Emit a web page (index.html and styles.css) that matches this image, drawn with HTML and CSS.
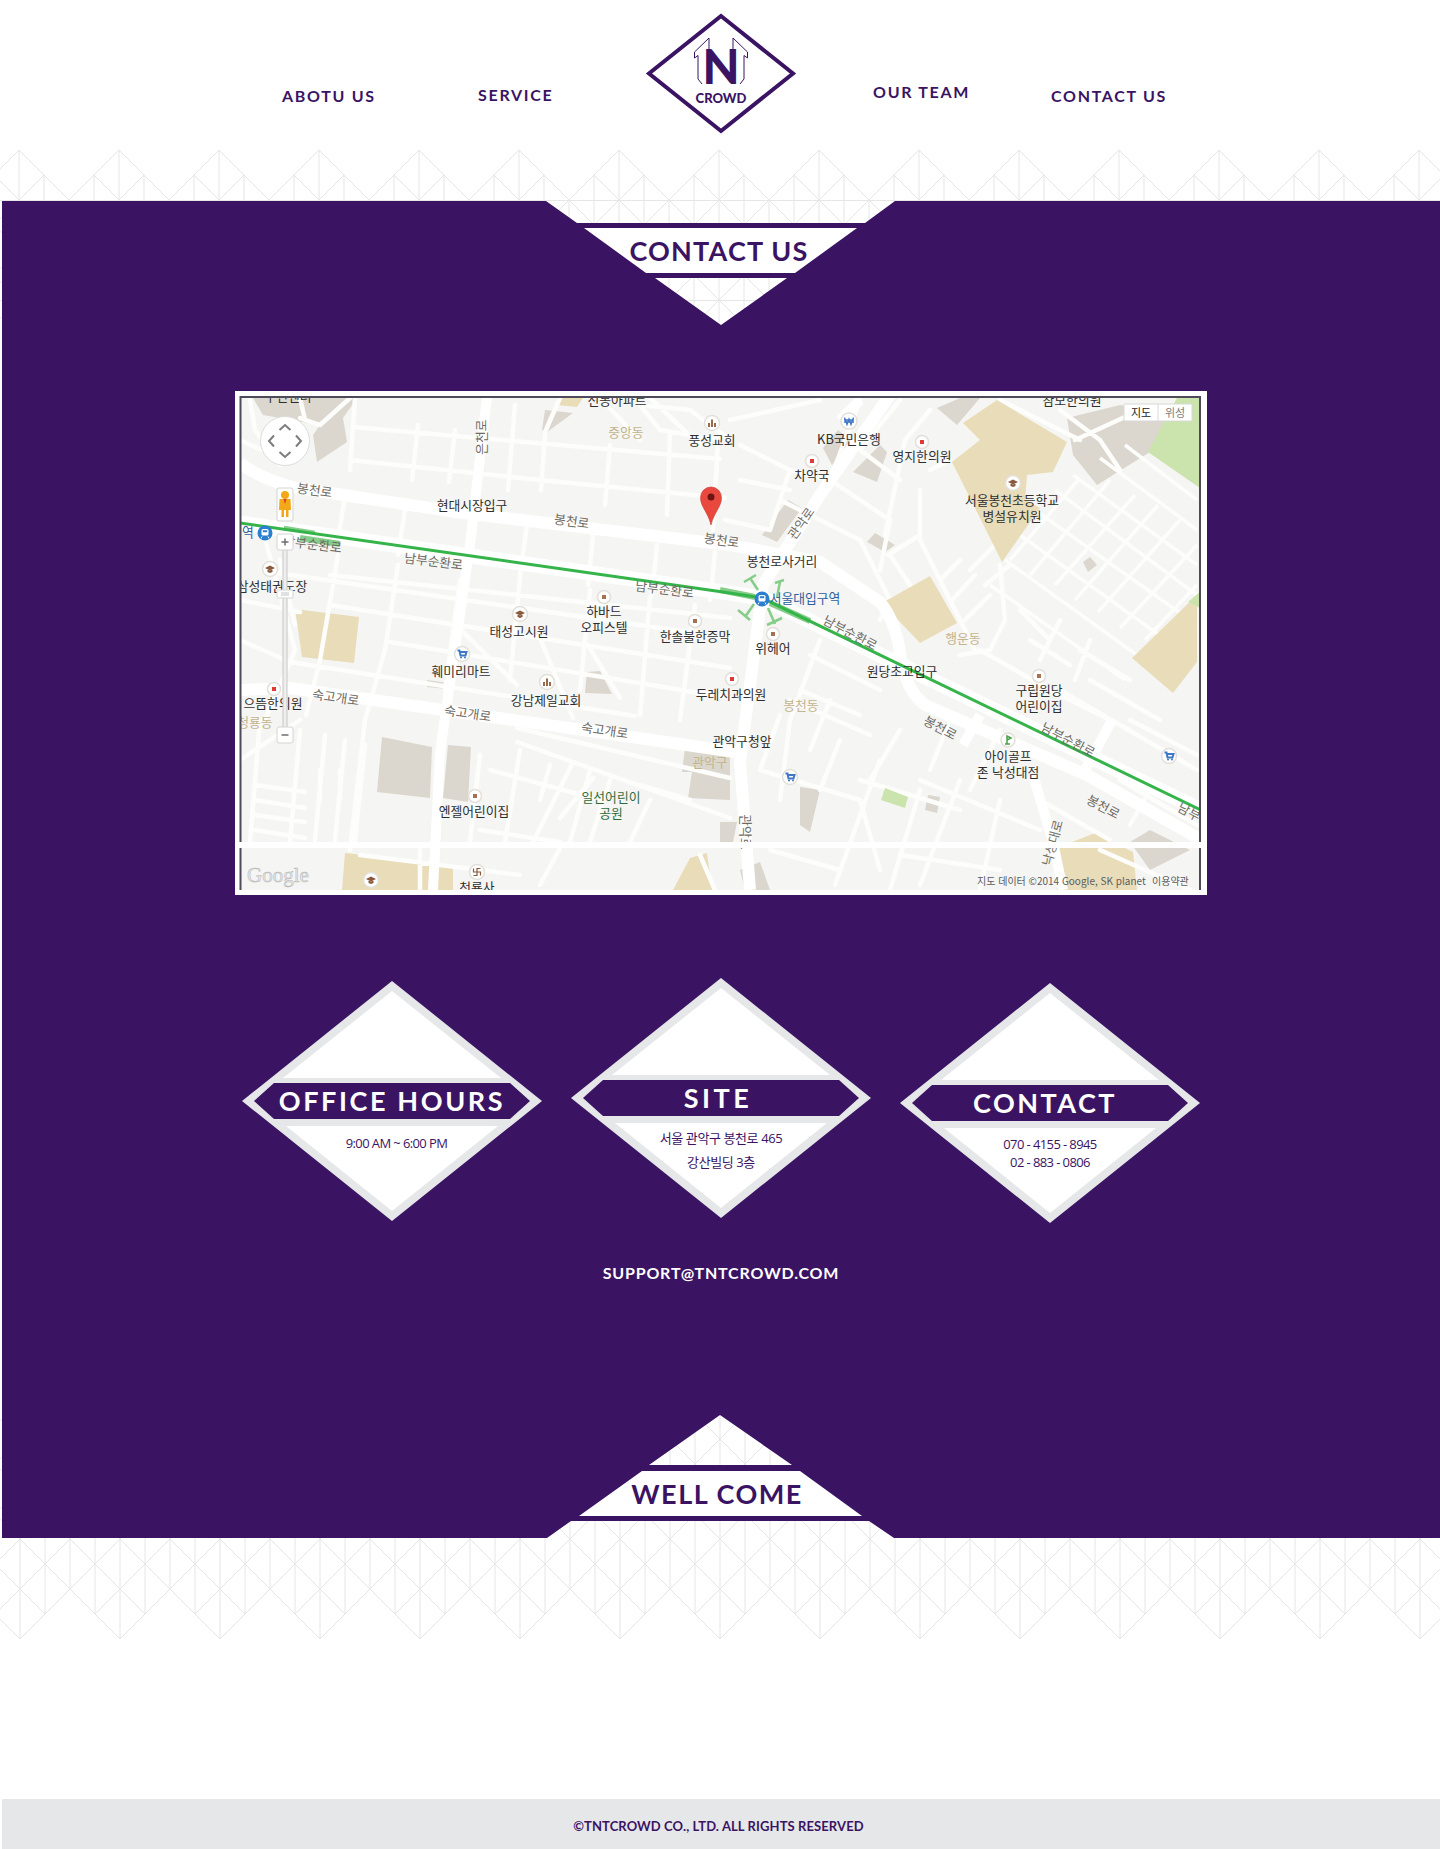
FILE: index.html
```html
<!DOCTYPE html>
<html lang="ko">

<head>
    <meta charset="UTF-8">
    <title>TNT Crowd - Contact Us</title>
    <link rel="stylesheet" href="styles.css">
</head>

<body>
    <div class="page">
        <!-- pattern behind the top of the panel -->
        <svg class="band band-top" width="1440" height="175" viewBox="0 150 1440 175">
            <defs>
                <pattern id="edgeTop" x="19" y="150" width="100" height="100" patternUnits="userSpaceOnUse">
                    <path class="lattice" d="M0 100V0M100 100V0M25 100V25M50 100V50M75 100V25M0 100L100 0M0 0L100 100M50 100L0 50M50 100L100 50M0 50L25 25M100 50L75 25" />
                </pattern>
                <pattern id="fullTop" x="19" y="250" width="100" height="100" patternUnits="userSpaceOnUse">
                    <path class="lattice" d="M0 0V100M25 0V100M50 0V100M75 0V100M100 0V100M0 0L100 100M0 100L100 0M50 0L0 50M50 0L100 50M0 50L50 100M100 50L50 100" />
                </pattern>
            </defs>
            <rect x="0" y="150" width="1440" height="100" fill="url(#edgeTop)" />
            <rect x="0" y="250" width="1440" height="75" fill="url(#fullTop)" />
            <path class="lattice" d="M0 200.5H1440M0 300.5H1440" />
        </svg>

        <!-- pattern behind the bottom of the panel -->
        <svg class="band band-bottom" width="1440" height="224" viewBox="0 1415 1440 224">
            <defs>
                <pattern id="edgeBottom" x="20" y="1539" width="100" height="100" patternUnits="userSpaceOnUse">
                    <path class="lattice" d="M0 0V100M100 0V100M25 0V75M50 0V50M75 0V75M0 0L100 100M0 100L100 0M50 0L0 50M50 0L100 50M0 50L25 75M100 50L75 75" />
                </pattern>
                <pattern id="fullBottom" x="20" y="1439" width="100" height="100" patternUnits="userSpaceOnUse">
                    <path class="lattice" d="M0 0V100M25 0V100M50 0V100M75 0V100M100 0V100M0 0L100 100M0 100L100 0M50 0L0 50M50 0L100 50M0 50L50 100M100 50L50 100" />
                </pattern>
            </defs>
            <rect x="0" y="1415" width="1440" height="124" fill="url(#fullBottom)" />
            <rect x="0" y="1539" width="1440" height="100" fill="url(#edgeBottom)" />
        </svg>

        <header class="site-header">
            <a class="nav-link nav-about" href="#">ABOTU US</a>
            <a class="nav-link nav-service" href="#">SERVICE</a>
            <svg class="logo" width="180" height="140" viewBox="0 0 180 140">
                <polygon class="logo-frame" points="91,16 163,73.5 91,131 19,73.5" />
                <path class="logo-arrow" d="M79 38L64.500 52V58L68 55.500V79L72 84M79 38V50" />
                <path class="logo-arrow" d="M103 38L117.500 52V58L114 55.500V79L110 84M103 38V50" />
                <text class="logo-n" x="91" y="84">N</text>
                <text class="logo-crowd" x="91" y="103">CROWD</text>
            </svg>
            <a class="nav-link nav-team" href="#">OUR TEAM</a>
            <a class="nav-link nav-contact" href="#">CONTACT US</a>
        </header>

        <main class="panel">
            <h1 class="ribbon ribbon-down">CONTACT US</h1>

            <div class="map-frame">
                <svg class="map" width="972" height="504" viewBox="235 391 972 504">
                    <defs>
                        <clipPath id="mapClip"><rect x="240" y="397" width="960" height="493" /></clipPath>
                        <g id="dotBrown"><circle r="6.500" class="badge" /><rect x="-2" y="-2" width="4" height="4" fill="#a9704f" /></g>
                        <g id="dotRed"><circle r="6.500" class="badge" /><rect x="-2" y="-2" width="4" height="4" fill="#e03a36" /></g>
                        <g id="school"><circle r="7.500" class="badge" /><path d="M-5 -1L0 -3.500L5 -1L0 1.500ZM-2.500 1V3L0 4L2.500 3V1" fill="#8a5a3c" /></g>
                        <g id="church"><circle r="7.500" class="badge" /><path d="M-4 4V0H-2V4ZM-1 4V-3.500H1V4ZM2 4V0H4V4Z" fill="#9a6a48" /></g>
                        <g id="cart"><circle r="7.500" class="badge" /><path d="M-4.500 -3.500H-2.500L-1.500 1.500H3.500L4.500 -2H-2" fill="none" stroke="#3f78c4" stroke-width="2" /><circle cx="-1" cy="3.500" r="1" fill="#3f78c4" /><circle cx="3" cy="3.500" r="1" fill="#3f78c4" /></g>
                        <g id="station"><circle r="7.500" fill="#2a7fd0" /><rect x="-3.500" y="-4" width="7" height="6.500" rx="1.500" fill="#fff" /><rect x="-2.200" y="-2.800" width="4.400" height="2" fill="#2a7fd0" /><path d="M-3 3.500L-4 5.500M3 3.500L4 5.500" stroke="#fff" /></g>
                    </defs>

                    <g clip-path="url(#mapClip)">
                        <rect class="land" x="240" y="397" width="960" height="493" />

                        <path class="tan" d="M295 609L359 617L354 663L302 657Z" />
                        <path class="tan" d="M345 853L453 865V890H342Z" />
                        <path class="tan" d="M673 890L690 858L707 853L712 890Z" />
                        <path class="tan" d="M1057 848L1095 833L1133 852L1137 890H1057Z" />
                        <path class="tan" d="M558 398H583L577 407L557 405Z" />

                        <path class="building" d="M253 398H357L343 418L347 442L317 462L313 435L320 425L263 415Z" />
                        <path class="building" d="M382 737L432 747L430 798L377 792Z" />
                        <path class="building" d="M448 745L471 747L468 802L443 798Z" />
                        <path class="building" d="M587 672L600 671L612 694L585 693Z" />
                        <path class="building" d="M427 680L448 683L447 689L427 687Z" />
                        <path class="building" d="M685 748L730 752V800L688 798L692 772L682 772Z" />
                        <path class="building" d="M545 410L573 413L547 432L542 430Z" />
                        <path class="building" d="M788 500L802 508L777 542L762 535Z" />
                        <path class="building" d="M867 542L875 533L895 545L885 552Z" />
                        <path class="building" d="M823 448L838 430L850 440L832 465Z" />
                        <path class="building" d="M853 472L880 445L887 452L877 482Z" />
                        <path class="building" d="M1067 418L1120 405L1170 412L1150 452L1097 485L1073 455Z" />
                        <path class="building" d="M937 408L960 398H980L957 425Z" />
                        <path class="building" d="M800 787L820 790L810 832L800 825Z" />
                        <path class="building" d="M928 795L940 797L937 813L925 810Z" />
                        <path class="building" d="M720 822H737L733 842H720Z" />
                        <path class="building" d="M1130 842L1150 830L1190 850L1150 870Z" />
                        <path class="building" d="M740 870L760 862L770 890H745Z" />

                        <!-- small streets -->
                        <path class="street" d="M353 427L560 445L720 459M350 460L540 480L725 498M270 572L730 638M330 605L730 668M390 642L730 698M290 662L635 716M517 728L730 778M240 600L300 612M240 640L290 662M240 690L300 690M240 760L300 720M330 575L730 618
                            M355 398L350 470M418 425L412 480M455 430L449 482M515 405L508 490M545 435L541 490M610 445L605 505M670 432L667 515M718 440L713 530
                            M345 497L337 545M405 510L398 555M527 525L520 575M593 535L588 585M657 545L652 595M715 552L710 600
                            M338 555L320 660L306 715M398 565L385 650L365 720L350 850M460 580L445 690M520 577L510 680M590 590L580 690M650 597L640 715M695 605L680 720
                            M463 632L517 685M540 638L573 718M588 645L620 698M260 520L295 650L265 720M280 560L295 625
                            M325 735L315 840M345 740L335 840M365 745L355 840M300 730L290 842M260 720L250 842M320 770V800M340 770V800
                            M255 785L305 792M255 800L305 808M255 815L305 822M255 830L305 838M480 755L470 842M520 750L505 842M550 765L540 800M590 770L570 842M517 742L730 818M573 762L533 842M593 778L560 818M650 800L630 842M640 785L690 800M610 780L590 842M490 770L600 800M480 830L560 842
                            M250 400L255 430L280 465M300 398L305 420M240 440L262 450M360 855L520 875M560 848L540 885M700 855L715 890M420 850L420 890M300 418L320 425L350 398
                            M640 405L690 410L730 440M640 405L660 430L720 440M600 398L640 440M560 398L545 432M650 398L700 445M730 420L820 400M740 445L790 470L770 530M790 470L830 480L860 400M780 500L860 540L890 600L880 620M830 480L890 520L880 570M740 480L790 490M725 520L770 530
                            M920 490L920 540L950 600L975 650M888 555L920 535M890 555L910 585M940 580L960 560M952 600L975 575M965 620L990 595M1000 565L1005 620L990 650L960 655M885 535L905 440M860 450L900 480M900 400L860 450M1000 400L1080 440M1060 410L1100 440L1120 470M1075 440L1140 410M980 650L1050 690L1130 730M1090 640L1075 680M1060 620L1040 660M1080 650L1130 680M905 440L930 410M930 470L950 460M970 570L1000 540M985 585L1010 565M1020 610L1050 640M1030 640L1070 665
                            M790 700L870 735M820 640L790 720L780 800M810 655L880 690M800 690L860 715M760 770L860 800L880 870M880 760L835 885M920 790L890 890M960 780L920 885M1000 800L980 890M1040 800L1110 840M1060 690L1197 770M1090 680L1160 720M1130 720L1197 755M1120 780L1197 825M840 740L820 790M900 730L870 780M770 850L840 870M780 715L760 770M900 855L1000 870M1100 850L1190 890M920 780L1040 830M860 780L960 810M950 720L930 770M1000 730L970 790M1150 790L1130 825M830 700L810 750" />

                        <!-- block grid on the east side -->
                        <path class="street-thin" d="M1073 475L1197 565M1055 490L1197 595M1035 510L1197 625M1020 535L1180 650M1005 560L1155 668M990 585L1125 680M1100 458L1197 530M1125 445L1197 500
                            M1010 560L1080 478M1030 575L1110 480M1055 585L1135 495M1075 600L1158 505M1098 612L1180 520M1120 628L1197 545M1145 640L1197 585" />

                        <path class="tan" d="M963 423L997 400L1067 442L1053 472L1027 475L1025 500L1040 508L1002 562L952 462L980 440Z" />
                        <path class="tan" d="M930 576L957 623L920 643L882 603Z" />
                        <path class="tan" d="M1197 595V662L1173 693L1132 658Z" />
                        <path class="park" d="M1148 452L1177 398H1200V488Z" />
                        <path class="park" d="M1188 602L1200 592V608Z" />
                        <path class="park" d="M885 788L908 797L905 808L881 800Z" />
                        <path class="building" d="M1083 562L1090 557L1097 565L1088 572Z" />

                        <!-- main roads -->
                        <path class="road-main" d="M240 463Q262 480 297 488L463 513L563 525L730 545L820 562L880 602Q895 620 900 652Q905 690 925 705L1087 775L1205 842" />
                        <path class="road-main" d="M240 690L290 688L443 710L597 732L735 752" />
                        <path class="road-main" d="M890 395L820 495L763 585L740 762L750 890" />
                        <path class="road-mid" d="M487 397L470 545L440 752L433 890" />
                        <path class="road-mid" d="M1033 775L1053 842L1063 890M980 715L963 745M1112 720L1085 770M860 400L840 420" />
                        <path class="road-nambu" d="M240 523L730 593L762 598L1205 812" />
                        <path class="transit-light" d="M300 538L340 544M720 590L755 597M770 603L810 621" />
                        <path class="transit-light-thin" d="M284 527L315 532M750 578L758 590M744 582L756 575M780 582L777 597M775 583L784 580M754 604L745 617M738 610L750 620M768 608L775 624M767 625L782 618" />
                        <path class="transit-line" d="M240 523L730 593L762 598L1205 812" />

                        <use href="#church" x="712" y="423" />
                        <use href="#school" x="270" y="569" />
                        <use href="#dotBrown" x="604" y="597" />
                        <use href="#school" x="520" y="614" />
                        <use href="#dotBrown" x="695" y="621" />
                        <use href="#cart" x="462" y="654" />
                        <use href="#church" x="547" y="682" />
                        <use href="#dotRed" x="274" y="689" />
                        <use href="#dotBrown" x="475" y="796" />
                        <use href="#school" x="371" y="880" />
                        <g transform="translate(477 872)"><circle r="7.500" class="badge" /><path d="M-3.500 -3.500V0H3.500V3.500M3.500 -3.500H0V3.500H-3.500" fill="none" stroke="#8a5a3c" stroke-width="1.200" /></g>
                        <g transform="translate(849 421)"><circle r="8" class="badge" /><path d="M-4.500 -3.500L-2 3.500L0 -2L2 3.500L4.500 -3.500M-5 -1H5M-5 1H5" fill="none" stroke="#3f78c4" stroke-width="1.300" /></g>
                        <use href="#dotRed" x="812" y="461" />
                        <use href="#dotRed" x="922" y="442" />
                        <use href="#school" x="1013" y="483" />
                        <use href="#dotBrown" x="773" y="634" />
                        <use href="#dotRed" x="732" y="679" />
                        <use href="#dotBrown" x="1039" y="676" />
                        <g transform="translate(1008 740)"><circle r="7" class="badge" /><path d="M-1 4V-4L3 -2L-1 0M-3 4H2" fill="none" stroke="#4aa04a" stroke-width="1.500" /></g>
                        <use href="#cart" x="1169" y="756" />
                        <use href="#cart" x="790" y="777" />
                        <use href="#station" x="762" y="599" />
                        <use href="#station" x="265" y="533" />

                        <text class="lbl" x="288" y="401">구민센터</text>
                        <text class="lbl" x="617" y="405">신봉아파트</text>
                        <text class="lbl area" x="626" y="437">중앙동</text>
                        <text class="lbl" x="712" y="445">풍성교회</text>
                        <text class="lbl road" transform="rotate(8 314 495)" x="314" y="495">봉천로</text>
                        <text class="lbl" x="472" y="510">현대시장입구</text>
                        <text class="lbl road" transform="rotate(8 571 526)" x="571" y="526">봉천로</text>
                        <text class="lbl road" transform="rotate(8 721 545)" x="721" y="545">봉천로</text>
                        <text class="lbl metro" x="248" y="537">역</text>
                        <text class="lbl road" transform="rotate(7 312 549)" x="312" y="549">남부순환로</text>
                        <text class="lbl road" transform="rotate(7 433 566)" x="433" y="566">남부순환로</text>
                        <text class="lbl road" transform="rotate(7 664 594)" x="664" y="594">남부순환로</text>
                        <text class="lbl" x="272" y="591">삼성태권도장</text>
                        <text class="lbl" x="519" y="636">태성고시원</text>
                        <text class="lbl" x="604" y="616">하바드</text>
                        <text class="lbl" x="604" y="632">오피스텔</text>
                        <text class="lbl" x="695" y="641">한솔불한증막</text>
                        <text class="lbl" x="461" y="676">훼미리마트</text>
                        <text class="lbl" x="731" y="699">두레치과의원</text>
                        <text class="lbl" x="273" y="708">으뜸한의원</text>
                        <text class="lbl road" transform="rotate(8 335 702)" x="335" y="702">숙고개로</text>
                        <text class="lbl road" transform="rotate(8 467 718)" x="467" y="718">숙고개로</text>
                        <text class="lbl road" transform="rotate(8 604 735)" x="604" y="735">숙고개로</text>
                        <text class="lbl" x="546" y="705">강남제일교회</text>
                        <text class="lbl area" x="255" y="727">청룡동</text>
                        <text class="lbl" x="742" y="746">관악구청앞</text>
                        <text class="lbl area" x="710" y="767">관악구</text>
                        <text class="lbl" x="474" y="816">엔젤어린이집</text>
                        <text class="lbl green" x="611" y="802">일선어린이</text>
                        <text class="lbl green" x="611" y="818">공원</text>
                        <text class="lbl" x="477" y="892">천룡사</text>
                        <text class="lbl road" transform="rotate(-90 486 437)" x="486" y="437">은천로</text>
                        <text class="lbl" x="849" y="444">KB국민은행</text>
                        <text class="lbl" x="922" y="461">영지한의원</text>
                        <text class="lbl" x="812" y="480">차약국</text>
                        <text class="lbl" x="1012" y="505">서울봉천초등학교</text>
                        <text class="lbl" x="1012" y="521">병설유치원</text>
                        <text class="lbl" x="1072" y="405">참모한의원</text>
                        <text class="lbl road" transform="rotate(-55 805 526)" x="805" y="526">관악로</text>
                        <text class="lbl" x="782" y="566">봉천로사거리</text>
                        <text class="lbl metro" x="805" y="603">서울대입구역</text>
                        <text class="lbl road" transform="rotate(28 848 637)" x="848" y="637">남부순환로</text>
                        <text class="lbl" x="773" y="653">위헤어</text>
                        <text class="lbl area" x="963" y="643">행운동</text>
                        <text class="lbl" x="902" y="676">원당초교입구</text>
                        <text class="lbl area" x="801" y="710">봉천동</text>
                        <text class="lbl" x="1039" y="695">구립원당</text>
                        <text class="lbl" x="1039" y="711">어린이집</text>
                        <text class="lbl road" transform="rotate(28 938 732)" x="938" y="732">봉천로</text>
                        <text class="lbl" x="1008" y="761">아이골프</text>
                        <text class="lbl" x="1008" y="777">존 낙성대점</text>
                        <text class="lbl road" transform="rotate(28 1066 744)" x="1066" y="744">남부순환로</text>
                        <text class="lbl road" transform="rotate(28 1101 811)" x="1101" y="811">봉천로</text>
                        <text class="lbl road" transform="rotate(28 1187 816)" x="1187" y="816">남부</text>
                        <text class="lbl road" transform="rotate(-75 1057 844)" x="1057" y="844">낙성대로</text>
                        <text class="lbl road" transform="rotate(90 741 832)" x="741" y="832">관악로</text>

                        <text class="google" x="247" y="882">Google</text>
                        <text class="credit" x="977" y="885">지도 데이터 ©2014 Google, SK planet</text>
                        <text class="credit" x="1152" y="885">이용약관</text>
                    </g>

                    <!-- pan control -->
                    <circle class="pan" cx="285" cy="441" r="24.500" />
                    <path class="pan-arrow" d="M279.500 430L285 425L290.500 430M279.500 452L285 457L290.500 452M274 435.500L269 441L274 446.500M296 435.500L301 441L296 446.500" />

                    <!-- pegman -->
                    <rect class="zoom-btn" x="277" y="488" width="16" height="33" rx="2" />
                    <circle cx="285" cy="495" r="4" fill="#f2a818" />
                    <path d="M279.500 499H290.500L291 510H288.500V517H286V510H284V517H281.500V510H279Z" fill="#f2a818" />
                    <path d="M283.500 499H286.500L285 504Z" fill="#d8402a" />

                    <!-- zoom slider -->
                    <rect class="zoom-track" x="283" y="548" width="4" height="180" />
                    <rect class="zoom-btn" x="277" y="534" width="16" height="16" rx="2" />
                    <path class="zoom-sign" d="M281.500 542H288.500M285 538.500V545.500" />
                    <rect class="zoom-btn" x="277" y="590" width="16" height="8" rx="1" />
                    <path class="zoom-grip" d="M281 593H289M281 595H289" />
                    <rect class="zoom-btn" x="277" y="727" width="16" height="16" rx="2" />
                    <path class="zoom-sign" d="M281.500 735H288.500" />

                    <!-- map type buttons -->
                    <rect class="type-btn" x="1124" y="404" width="68" height="17" rx="1" />
                    <path class="type-split" d="M1158 404V421" />
                    <text class="type-on" x="1141" y="417">지도</text>
                    <text class="type-off" x="1175" y="417">위성</text>

                    <!-- marker -->
                    <path d="M711 525C708 512 700.500 507 700.500 497.500A10.500 10.500 0 0 1 721.500 497.500C721.500 507 714 512 711 525Z" fill="#e9483f" stroke="#c9352e" stroke-width=".6" />
                    <circle cx="711" cy="497" r="3.500" fill="#6b1512" />

                    <path class="map-edge" d="M240.500 842V397H1200V842M240.500 848V890M1200 848V890" />
                    <rect x="235" y="842" width="972" height="6" fill="#fff" />
                </svg>
            </div>

            <section class="diamonds">
                <article class="diamond diamond-hours">
                    <div class="diamond-top"></div>
                    <h2 class="diamond-label">OFFICE HOURS</h2>
                    <div class="diamond-body">
                        <p>9:00 AM ~ 6:00 PM</p>
                    </div>
                </article>
                <article class="diamond diamond-site">
                    <div class="diamond-top"></div>
                    <h2 class="diamond-label">SITE</h2>
                    <div class="diamond-body">
                        <p class="site-lines">서울 관악구 봉천로 465<br>강산빌딩 3층</p>
                    </div>
                </article>
                <article class="diamond diamond-contact">
                    <div class="diamond-top"></div>
                    <h2 class="diamond-label">CONTACT</h2>
                    <div class="diamond-body">
                        <p>070 - 4155 - 8945<br>02 - 883 - 0806</p>
                    </div>
                </article>
            </section>

            <p class="support-mail">SUPPORT@TNTCROWD.COM</p>

            <h2 class="ribbon ribbon-up">WELL COME</h2>
        </main>

        <footer class="site-footer">©TNTCROWD CO., LTD. ALL RIGHTS RESERVED</footer>
    </div>
</body>

</html>
```
FILE: styles.css
```css
html,
body {
    margin: 0;
    padding: 0;
    background-color: #fff;
}

.page {
    position: relative;
    width: 1440px;
    height: 1849px;
    overflow: hidden;
    font-family: 'Lato', sans-serif;
    color: #3a1463; /* brand purple */
}

/* lattice pattern, only seen around the panel */
.band {
    position: absolute;
    left: 0;
}

.band-top {
    top: 150px;
}

.band-bottom {
    top: 1415px;
}

.lattice {
    fill: none;
    stroke: #e6e6e6;
    stroke-width: 1;
}

/* header */
.site-header {
    position: relative;
    display: grid;
    grid-template-columns: 196px 152px 243px 178px auto;
    align-items: start;
    height: 201px;
    padding-left: 282px;
    box-sizing: border-box;
}

.nav-link {
    color: #3a1463;
    font-size: 16px;
    font-weight: 700;
    line-height: 16px;
    letter-spacing: 1.700px;
    text-decoration: none;
    white-space: nowrap;
}

.nav-about {
    margin-top: 88px;
}

.nav-service {
    margin-top: 87px;
}

.nav-team {
    margin-top: 84px;
}

.nav-contact {
    margin-top: 88px;
}

.logo {
    display: block;
}

.logo-frame {
    fill: #fff;
    stroke: #3a1463;
    stroke-width: 4;
}

.logo-arrow {
    fill: none;
    stroke: #3a1463;
    stroke-width: 1;
}

.logo-n {
    fill: #3a1463;
    font-size: 48px;
    font-weight: 900;
    text-anchor: middle;
}

.logo-crowd {
    fill: #3a1463;
    font-size: 13px;
    font-weight: 900;
    text-anchor: middle;
}

/* purple panel, the notches are cut out of it */
.panel {
    position: relative;
    width: 1438px;
    height: 1337px;
    margin-left: 2px;
    box-sizing: border-box;
    padding-top: 27px;
    background-color: #3a1463;
    clip-path: path(evenodd, "M0 0H1438V1337H0Z M544 0L575 22H863L893 0Z M653 77H785L719 124Z M545 1337L569 1320H867L892 1337Z M647 1264H790L718 1214Z");
}

.ribbon {
    width: 1438px;
    height: 45px;
    margin: 0;
    box-sizing: border-box;
    background-color: #fff;
    color: #3a1463;
    font-weight: 700;
    line-height: 45px;
    text-align: center;
}

.ribbon-down {
    padding-right: 4px;
    font-size: 27px;
    letter-spacing: 1.200px;
    clip-path: polygon(582px 0, 855px 0, 793px 45px, 644px 45px);
}

.ribbon-up {
    margin-top: 188px;
    padding-right: 8px;
    font-size: 27px;
    letter-spacing: 1.500px;
    clip-path: polygon(640px 0, 798px 0, 860px 45px, 577px 45px);
}

/* map */
.map-frame {
    width: 972px;
    height: 504px;
    margin: 118px auto 0;
    background-color: #fff;
}

.map {
    display: block;
    font-family: 'Noto Sans CJK KR', 'Noto Sans', sans-serif;
}

.land {
    fill: #f5f5f3;
}

.tan {
    fill: #e9dcb9;
}

.park {
    fill: #cbe3ac;
}

.building {
    fill: #dbd7ce;
}

.street {
    fill: none;
    stroke: #fdfdfb;
    stroke-width: 4.500;
    stroke-linecap: round;
    stroke-linejoin: round;
}

.street-thin {
    fill: none;
    stroke: #fdfdfb;
    stroke-width: 3.500;
}

.road-main {
    fill: none;
    stroke: #fff;
    stroke-width: 12;
    stroke-linejoin: round;
}

.road-mid {
    fill: none;
    stroke: #fff;
    stroke-width: 10;
}

.road-nambu {
    fill: none;
    stroke: #fff;
    stroke-width: 15;
}

.transit-line {
    fill: none;
    stroke: #35b44a;
    stroke-width: 3;
}

.transit-light {
    fill: none;
    stroke: #86cd8a;
    stroke-width: 6;
}

.transit-light-thin {
    fill: none;
    stroke: #86cd8a;
    stroke-width: 2.500;
}

.badge {
    fill: #fff;
    stroke: #e3e0da;
    stroke-width: 1.500;
}

.lbl {
    fill: #2e2e2e;
    font-size: 12.800px;
    text-anchor: middle;
}

.road {
    fill: #6e6b63;
}

.area {
    fill: #c4b48c;
}

.green {
    fill: #2f6d3a;
}

.metro {
    fill: #2c5f9e;
}

.google {
    fill: #e6e6e6;
    stroke: #b5b5b5;
    stroke-width: .5px;
    font-family: 'Liberation Serif', serif;
    font-size: 21px;
}

.credit {
    fill: #5c5c5c;
    font-size: 10px;
}

.pan {
    fill: #fff;
    stroke: #dcdcdc;
}

.pan-arrow {
    fill: none;
    stroke: #7d7d7d;
    stroke-width: 2;
}

.zoom-btn {
    fill: #fff;
    stroke: #d4d4d4;
}

.zoom-track {
    fill: #eeeeee;
    stroke: #c8c8c8;
}

.zoom-sign {
    fill: none;
    stroke: #6e6e6e;
    stroke-width: 1.500;
}

.zoom-grip {
    fill: none;
    stroke: #c2c2c2;
}

.type-btn {
    fill: #fff;
    stroke: #d9d9d9;
}

.type-split {
    stroke: #d9d9d9;
}

.type-on {
    fill: #222;
    font-size: 11px;
    text-anchor: middle;
}

.type-off {
    fill: #7c7c7c;
    font-size: 11px;
    text-anchor: middle;
}

.map-edge {
    fill: none;
    stroke: #4f4a5a;
    stroke-width: 2;
}

/* diamonds */
.diamonds {
    display: flex;
    align-items: flex-start;
    gap: 29px;
    width: 958px;
    margin: 83px auto 0;
}

.diamond {
    display: flex;
    flex-direction: column;
    flex: none;
    width: 300px;
    height: 240px;
    background-color: #e6e7e8;
    clip-path: polygon(150px 0, 300px 120px, 150px 240px, 0 120px);
}

.diamond-hours {
    margin-top: 3px;
}

.diamond-contact {
    margin-top: 5px;
}

.diamond-top {
    flex: none;
    height: 97px;
    background-color: #fff;
    clip-path: polygon(150px 10px, 259px 97px, 41px 97px);
}

.diamond-label {
    flex: none;
    height: 36px;
    margin: 5px 0 7px;
    background-color: #3a1463;
    color: #fff;
    font-size: 27px;
    font-weight: 700;
    line-height: 36px;
    text-align: center;
    clip-path: polygon(32px 0, 268px 0, 288px 18px, 268px 36px, 32px 36px, 12px 18px);
}

.diamond-hours .diamond-label {
    letter-spacing: 2.600px;
}

.diamond-site .diamond-label {
    letter-spacing: 3.500px;
    padding-right: 6px;
    box-sizing: border-box;
}

.diamond-contact .diamond-label {
    letter-spacing: 2.500px;
    padding-right: 10px;
    box-sizing: border-box;
}

.diamond-body {
    flex: none;
    height: 95px;
    background-color: #fff;
    clip-path: polygon(44px 0, 256px 0, 150px 85px);
    text-align: center;
}

.diamond-body p {
    margin: 7px 0 0;
    color: #3a1463;
    font-family: 'Open Sans', 'Noto Sans CJK KR', sans-serif;
    font-size: 13px;
    line-height: 18px;
    letter-spacing: -.6px;
}

.diamond-hours .diamond-body p {
    margin-top: 8px;
    padding-left: 9px;
}

.diamond-body .site-lines {
    line-height: 24px;
    margin-top: 3px;
    letter-spacing: -.4px;
}

.support-mail {
    margin: 40px 0 0;
    color: #fff;
    font-size: 16px;
    font-weight: 700;
    line-height: 20px;
    letter-spacing: .8px;
    text-align: center;
}

/* footer */
.site-footer {
    width: 1438px;
    height: 50px;
    margin: 261px 0 0 2px;
    box-sizing: border-box;
    padding-right: 5px;
    background-color: #e6e7e9;
    color: #3a1463;
    font-size: 13px;
    font-weight: 700;
    line-height: 54px;
    letter-spacing: .1px;
    text-align: center;
}
```
